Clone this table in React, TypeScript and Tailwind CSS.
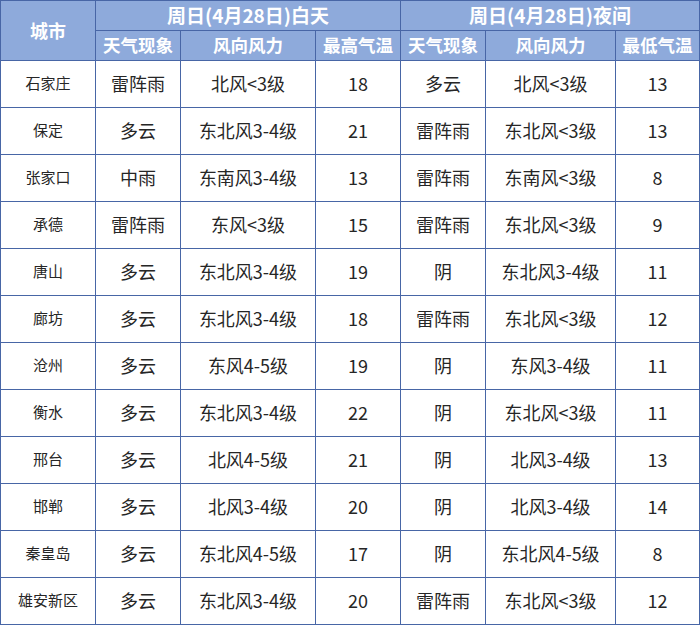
const rows: [string, string, string, string, string, string, string][] = [
  ["石家庄", "雷阵雨", "北风<3级", "18", "多云", "北风<3级", "13"],
  ["保定", "多云", "东北风3-4级", "21", "雷阵雨", "东北风<3级", "13"],
  ["张家口", "中雨", "东南风3-4级", "13", "雷阵雨", "东南风<3级", "8"],
  ["承德", "雷阵雨", "东风<3级", "15", "雷阵雨", "东北风<3级", "9"],
  ["唐山", "多云", "东北风3-4级", "19", "阴", "东北风3-4级", "11"],
  ["廊坊", "多云", "东北风3-4级", "18", "雷阵雨", "东北风<3级", "12"],
  ["沧州", "多云", "东风4-5级", "19", "阴", "东风3-4级", "11"],
  ["衡水", "多云", "东北风3-4级", "22", "阴", "东北风<3级", "11"],
  ["邢台", "多云", "北风4-5级", "21", "阴", "北风3-4级", "13"],
  ["邯郸", "多云", "北风3-4级", "20", "阴", "北风3-4级", "14"],
  ["秦皇岛", "多云", "东北风4-5级", "17", "阴", "东北风4-5级", "8"],
  ["雄安新区", "多云", "东北风3-4级", "20", "雷阵雨", "东北风<3级", "12"],
];

const widths = [95, 85, 135, 85, 85, 130, 84];

export default function App() {
  const th = "border border-[#4866a6] bg-[#8eaadb] text-white font-bold text-center p-0";
  const td = "border border-[#4866a6] text-center p-0 text-[#262626]";
  return (
    <div
      className="w-[700px] h-[625px] bg-white overflow-hidden"
      style={{ fontFamily: '"Noto Sans CJK SC", "Noto Sans", sans-serif' }}
    >
      <table className="table-fixed border-collapse w-[699px]">
        <colgroup>
          {widths.map((w, i) => (
            <col key={i} style={{ width: w }} />
          ))}
        </colgroup>
        <thead>
          <tr className="h-[29px]">
            <th rowSpan={2} className={`${th} text-[18px]`}>城市</th>
            <th colSpan={3} className={`${th} text-[19px]`}>周日(4月28日)白天</th>
            <th colSpan={3} className={`${th} text-[19px]`}>周日(4月28日)夜间</th>
          </tr>
          <tr className="h-[30px]">
            {["天气现象", "风向风力", "最高气温", "天气现象", "风向风力", "最低气温"].map((h, i) => (
              <th key={i} className={`${th} text-[17.5px]`}>{h}</th>
            ))}
          </tr>
        </thead>
        <tbody>
          {rows.map((r) => (
            <tr key={r[0]} className="h-[47px]">
              {r.map((c, i) => (
                <td key={i} className={`${td} ${i === 0 ? "text-[15px]" : "text-[18px]"}`}>
                  {c}
                </td>
              ))}
            </tr>
          ))}
        </tbody>
      </table>
    </div>
  );
}
